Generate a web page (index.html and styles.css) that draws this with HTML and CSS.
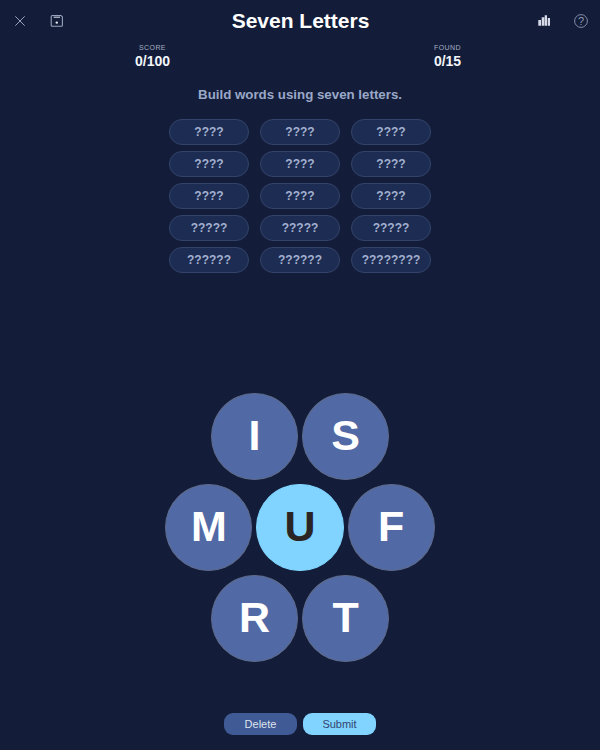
FILE: index.html
```html
<!DOCTYPE html>
<html lang="en">

<head>
    <meta charset="UTF-8">
    <meta name="viewport" content="width=device-width, initial-scale=1.0">
    <title>Seven Letters</title>
    <link rel="stylesheet" href="styles.css">
</head>

<body>
    <div class="container">
        <header class="top-bar">
            <div class="icons icons-left">
                <svg class="icon" viewBox="0 0 14 14" width="14" height="14">
                    <path d="M2.3 2.3 L11.7 11.7 M11.7 2.3 L2.3 11.7" fill="none" stroke="#98a2ba" stroke-width="1" />
                </svg>
                <svg class="icon" viewBox="0 0 14 14" width="14" height="14">
                    <path d="M2.2 1.5 H11 L12.4 2.9 V11.2 A1 1 0 0 1 11.4 12.2 H2.2 A1 1 0 0 1 1.2 11.2 V2.5 A1 1 0 0 1 2.2 1.5 Z" fill="none" stroke="#98a2ba" stroke-width="1.1" />
                    <path d="M3.6 3.2 H10" stroke="#c3cad9" stroke-width="1.2" />
                    <circle cx="6.8" cy="8.6" r="1.2" fill="#e4e8f2" />
                </svg>
            </div>
            <h1>Seven Letters</h1>
            <div class="icons icons-right">
                <svg class="icon" viewBox="0 0 14 14" width="14" height="14">
                    <path d="M1.3 6 H4 V11.7 H1.3 Z M4.7 3.3 H7.3 V11.7 H4.7 Z M7.7 1.3 H10 V11.7 H7.7 Z M10.7 4 H13 V11.7 H10.7 Z" fill="#d5dae6" />
                </svg>
                <svg class="icon" viewBox="0 0 14 14" width="14" height="14">
                    <circle cx="7" cy="7" r="6.4" fill="none" stroke="#8f9ab3" stroke-width="0.9" />
                    <text x="7" y="10.6" text-anchor="middle" class="help-mark">?</text>
                </svg>
            </div>
        </header>

        <div class="stats">
            <div class="stat">
                <div class="stat-label">SCORE</div>
                <div class="stat-value">0/100</div>
            </div>
            <div class="stat">
                <div class="stat-label">FOUND</div>
                <div class="stat-value">0/15</div>
            </div>
        </div>

        <p class="hint">Build words using seven letters.</p>

        <div class="words">
            <div class="word">????</div>
            <div class="word">????</div>
            <div class="word">????</div>
            <div class="word">????</div>
            <div class="word">????</div>
            <div class="word">????</div>
            <div class="word">????</div>
            <div class="word">????</div>
            <div class="word">????</div>
            <div class="word">?????</div>
            <div class="word">?????</div>
            <div class="word">?????</div>
            <div class="word">??????</div>
            <div class="word">??????</div>
            <div class="word">????????</div>
        </div>

        <div class="hive">
            <div class="hive-row">
                <div class="cell">I</div>
                <div class="cell">S</div>
            </div>
            <div class="hive-row">
                <div class="cell">M</div>
                <div class="cell center">U</div>
                <div class="cell">F</div>
            </div>
            <div class="hive-row">
                <div class="cell">R</div>
                <div class="cell">T</div>
            </div>
        </div>

        <div class="actions">
            <button class="btn btn-delete" type="button">Delete</button>
            <button class="btn btn-submit" type="button">Submit</button>
        </div>
    </div>
</body>

</html>
```

FILE: styles.css
```css
* {
    box-sizing: border-box;
}

body {
    margin: 0;
    background-color: #131d39;
    font-family: "Liberation Sans", Arial, sans-serif;
    color: #ffffff;
}

.container {
    width: 600px;
    height: 750px;
    overflow: hidden;
}

.top-bar {
    display: flex;
    align-items: center;
    justify-content: space-between;
    height: 42px;
    padding: 0 12px 0 13px;
}

.top-bar h1 {
    margin: 0;
    font-size: 21px;
    font-weight: 700;
    line-height: 42px;
}

.icons {
    display: flex;
    gap: 23px;
    width: 100px;
}

.icons-right {
    justify-content: flex-end;
}

.icon {
    display: block;
}

.help-mark {
    font-size: 11px;
    fill: #8f9ab3;
}

.stats {
    display: flex;
    justify-content: space-between;
    width: 365px;
    margin: 1px auto 0 auto;
}

.stat {
    width: 70px;
    text-align: center;
}

.stat-label {
    font-size: 7px;
    line-height: 9px;
    letter-spacing: 0.4px;
    color: #a4adc2;
}

.stat-value {
    margin-top: 1px;
    font-size: 14px;
    font-weight: 700;
    line-height: 17px;
    color: #f2f5fb;
}

.hint {
    margin: 16px 0 0 0;
    font-size: 13.3px;
    font-weight: 700;
    line-height: 17px;
    text-align: center;
    color: #9aa8c8;
}

.words {
    display: grid;
    grid-template-columns: repeat(3, 80px);
    grid-auto-rows: 26px;
    gap: 6px 11px;
    justify-content: center;
    margin-top: 16px;
}

.word {
    display: flex;
    align-items: center;
    justify-content: center;
    background-color: #1d2c52;
    border: 1px solid #34436a;
    border-radius: 13px;
    font-size: 12px;
    font-weight: 700;
    color: #a3b0cf;
}

.hive {
    display: flex;
    flex-direction: column;
    gap: 4px;
    margin-top: 120px;
}

.hive-row {
    display: flex;
    justify-content: center;
    gap: 4px;
}

.cell {
    display: flex;
    align-items: center;
    justify-content: center;
    width: 87.2px;
    height: 87px;
    padding-bottom: 2px;
    background-color: #516aa6;
    border: 1px solid #5d6a8c;
    border-radius: 50%;
    font-size: 43px;
    font-weight: 700;
    color: #ffffff;
}

.cell.center {
    background-color: #80d4ff;
    border-color: #80d4ff;
    color: #2a2422;
}

.actions {
    display: flex;
    justify-content: center;
    gap: 6px;
    margin-top: 51px;
}

.btn {
    width: 73px;
    height: 22px;
    padding: 0;
    border: none;
    border-radius: 9px;
    font-family: inherit;
    font-size: 11px;
}

.btn-delete {
    background-color: #3f5a94;
    color: #dfe4ef;
}

.btn-submit {
    background-color: #80d4ff;
    color: #33456e;
}
```
